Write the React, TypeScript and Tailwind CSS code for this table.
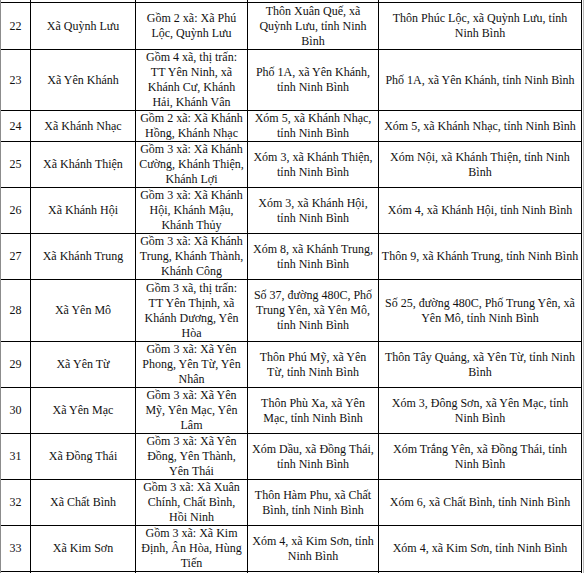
type Row = {
  no: string;
  name: string;
  merged: string[];
  oldHq: string[];
  newHq: string[];
  h: string;
};

// row heights are taken straight from the scan (border included)
const rows: Row[] = [
  {
    no: "22",
    name: "Xã Quỳnh Lưu",
    merged: ["Gồm 2 xã: Xã Phú", "Lộc, Quỳnh Lưu"],
    oldHq: ["Thôn Xuân Quế, xã", "Quỳnh Lưu, tỉnh Ninh", "Bình"],
    newHq: ["Thôn Phúc Lộc, xã Quỳnh Lưu, tỉnh", "Ninh Bình"],
    h: "h-[47px]",
  },
  {
    no: "23",
    name: "Xã Yên Khánh",
    merged: ["Gồm 4 xã, thị trấn:", "TT Yên Ninh, xã", "Khánh Cư, Khánh", "Hải, Khánh Vân"],
    oldHq: ["Phố 1A, xã Yên Khánh,", "tỉnh Ninh Bình"],
    newHq: ["Phố 1A, xã Yên Khánh, tỉnh Ninh Bình"],
    h: "h-[61px]",
  },
  {
    no: "24",
    name: "Xã Khánh Nhạc",
    merged: ["Gồm 2 xã: Xã Khánh", "Hồng, Khánh Nhạc"],
    oldHq: ["Xóm 5, xã Khánh Nhạc,", "tỉnh Ninh Bình"],
    newHq: ["Xóm 5, xã Khánh Nhạc, tỉnh Ninh Bình"],
    h: "h-[31px]",
  },
  {
    no: "25",
    name: "Xã Khánh Thiện",
    merged: ["Gồm 3 xã: Xã Khánh", "Cường, Khánh Thiện,", "Khánh Lợi"],
    oldHq: ["Xóm 3, xã Khánh Thiện,", "tỉnh Ninh Bình"],
    newHq: ["Xóm Nội, xã Khánh Thiện, tỉnh Ninh", "Bình"],
    h: "h-[46px]",
  },
  {
    no: "26",
    name: "Xã Khánh Hội",
    merged: ["Gồm 3 xã: Xã Khánh", "Hội, Khánh Mậu,", "Khánh Thủy"],
    oldHq: ["Xóm 3, xã Khánh Hội,", "tỉnh Ninh Bình"],
    newHq: ["Xóm 4, xã Khánh Hội, tỉnh Ninh Bình"],
    h: "h-[46px]",
  },
  {
    no: "27",
    name: "Xã Khánh Trung",
    merged: ["Gồm 3 xã: Xã Khánh", "Trung, Khánh Thành,", "Khánh Công"],
    oldHq: ["Xóm 8, xã Khánh Trung,", "tỉnh Ninh Bình"],
    newHq: ["Thôn 9, xã Khánh Trung, tỉnh Ninh Bình"],
    h: "h-[46px]",
  },
  {
    no: "28",
    name: "Xã Yên Mô",
    merged: ["Gồm 3 xã, thị trấn:", "TT Yên Thịnh, xã", "Khánh Dương, Yên", "Hòa"],
    oldHq: ["Số 37, đường 480C, Phố", "Trung Yên, xã Yên Mô,", "tỉnh Ninh Bình"],
    newHq: ["Số 25, đường 480C, Phố Trung Yên, xã", "Yên Mô, tỉnh Ninh Bình"],
    h: "h-[62px]",
  },
  {
    no: "29",
    name: "Xã Yên Từ",
    merged: ["Gồm 3 xã: Xã Yên", "Phong, Yên Từ, Yên", "Nhân"],
    oldHq: ["Thôn Phú Mỹ, xã Yên", "Từ, tỉnh Ninh Bình"],
    newHq: ["Thôn Tây Quảng, xã Yên Từ, tỉnh Ninh", "Bình"],
    h: "h-[46px]",
  },
  {
    no: "30",
    name: "Xã Yên Mạc",
    merged: ["Gồm 3 xã: Xã Yên", "Mỹ, Yên Mạc, Yên", "Lâm"],
    oldHq: ["Thôn Phù Xa, xã Yên", "Mạc, tỉnh Ninh Bình"],
    newHq: ["Xóm 3, Đông Sơn, xã Yên Mạc, tỉnh", "Ninh Bình"],
    h: "h-[46px]",
  },
  {
    no: "31",
    name: "Xã Đồng Thái",
    merged: ["Gồm 3 xã: Xã Yên", "Đồng, Yên Thành,", "Yên Thái"],
    oldHq: ["Xóm Dầu, xã Đồng Thái,", "tỉnh Ninh Bình"],
    newHq: ["Xóm Trắng Yên, xã Đồng Thái, tỉnh", "Ninh Bình"],
    h: "h-[46px]",
  },
  {
    no: "32",
    name: "Xã Chất Bình",
    merged: ["Gồm 3 xã: Xã Xuân", "Chính, Chất Bình,", "Hồi Ninh"],
    oldHq: ["Thôn Hàm Phu, xã Chất", "Bình, tỉnh Ninh Bình"],
    newHq: ["Xóm 6, xã Chất Bình, tỉnh Ninh Bình"],
    h: "h-[46px]",
  },
  {
    no: "33",
    name: "Xã Kim Sơn",
    merged: ["Gồm 3 xã: Xã Kim", "Định, Ân Hòa, Hùng", "Tiến"],
    oldHq: ["Xóm 4, xã Kim Sơn, tỉnh", "Ninh Bình"],
    newHq: ["Xóm 4, xã Kim Sơn, tỉnh Ninh Bình"],
    h: "h-[46px]",
  },
];

const cellBase =
  "flex flex-col items-center justify-center text-center whitespace-nowrap border-r border-black";

const Lines = ({ lines }: { lines: string[] }) => (
  <>
    {lines.map((l, i) => (
      <span key={i}>{l}</span>
    ))}
  </>
);

// empty strip of cells, used for the cut-off rows above and below
const StubRow = ({ className }: { className: string }) => (
  <div className={`flex ${className}`}>
    <div className="w-[30px] border-r border-black" />
    <div className="w-[105px] border-r border-black" />
    <div className="w-[112px] border-r border-black" />
    <div className="w-[131px] border-r border-black" />
    <div className="w-[203px] border-r border-black" />
  </div>
);

export default function App() {
  return (
    <div className="w-[584px] h-[573px] overflow-hidden bg-white font-['Liberation_Serif',_'Times_New_Roman',_serif] text-[12px] leading-[15px] text-[#111]">
      <div className="w-[584px] border-r border-[#b8b8b8]">
        <div className="w-[582px] border-l border-[#8c8c8c]">
          <StubRow className="h-[3px] border-b border-black" />

          {rows.map((r) => (
            <div key={r.no} className={`flex border-b border-black ${r.h}`}>
              <div className={`${cellBase} w-[30px]`}>{r.no}</div>
              <div className={`${cellBase} w-[105px]`}>{r.name}</div>
              <div className={`${cellBase} w-[112px]`}>
                <Lines lines={r.merged} />
              </div>
              <div className={`${cellBase} w-[131px]`}>
                <Lines lines={r.oldHq} />
              </div>
              <div className={`${cellBase} w-[203px]`}>
                <Lines lines={r.newHq} />
              </div>
            </div>
          ))}

          <StubRow className="h-[10px]" />
        </div>
      </div>
    </div>
  );
}
